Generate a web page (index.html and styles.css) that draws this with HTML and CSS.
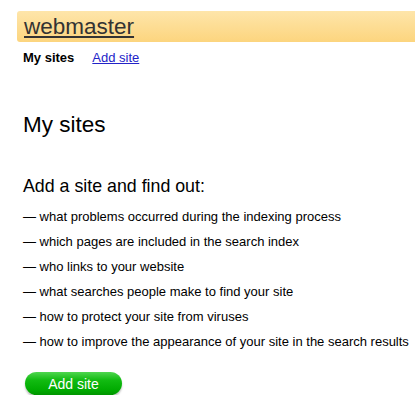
FILE: index.html
```html
<!DOCTYPE html>
<html>
<head>
<meta charset="utf-8">
<link rel="stylesheet" href="styles.css">
</head>
<body>
<div class="header"><a class="logo" href="#">webmaster</a></div>
<nav class="tabs">
  <span class="tab-current">My sites</span>
  <a class="tab-link" href="#">Add site</a>
</nav>
<main class="content">
  <h1 class="title">My sites</h1>
  <h2 class="subtitle">Add a site and find out:</h2>
  <ul class="features">
    <li>— what problems occurred during the indexing process</li>
    <li>— which pages are included in the search index</li>
    <li>— who links to your website</li>
    <li>— what searches people make to find your site</li>
    <li>— how to protect your site from viruses</li>
    <li>— how to improve the appearance of your site in the search results</li>
  </ul>
  <button class="add-btn">Add site</button>
</main>
</body>
</html>
```
FILE: styles.css
```css
html, body {
  margin: 0;
  padding: 0;
  background: #fff;
  font-family: "Liberation Sans", Arial, sans-serif;
  color: #000;
}
body {
  padding: 11px 0 0 17px;
}
.header {
  height: 31px;
  border-radius: 3px 0 0 3px;
  background: linear-gradient(to bottom, #fee5aa, #fcd57e);
  padding-left: 7px;
  display: flex;
  align-items: center;
}
.logo {
  font-size: 22.5px;
  color: #333;
  text-decoration: underline;
  text-decoration-thickness: 2px;
  text-underline-offset: 2px;
  line-height: 26px;
}
.tabs {
  display: flex;
  gap: 18px;
  padding-left: 6px;
  margin-top: 8px;
  font-size: 13px;
  line-height: 16px;
}
.tab-current {
  font-weight: bold;
}
.tab-link {
  color: #2323c8;
}
.content {
  padding-left: 6px;
}
.title {
  margin: 46px 0 0;
  font-size: 22.5px;
  font-weight: normal;
  line-height: 26px;
}
.subtitle {
  margin: 38px 0 0;
  font-size: 17.8px;
  font-weight: normal;
  line-height: 20px;
}
.features {
  list-style: none;
  margin: 8px 0 0;
  padding: 0;
  font-size: 13px;
  line-height: 25px;
}
.add-btn {
  margin: 18px 0 0 2px;
  width: 97px;
  height: 23px;
  border: none;
  border-radius: 12px;
  background: linear-gradient(to bottom, #4fd64f 0%, #12bb12 35%, #00aa00 80%, #009400 100%);
  box-shadow: 0 2px 2px rgba(0, 0, 0, 0.25);
  color: #fff;
  font-family: "Liberation Sans", Arial, sans-serif;
  font-size: 14px;
  padding: 0;
}
```
